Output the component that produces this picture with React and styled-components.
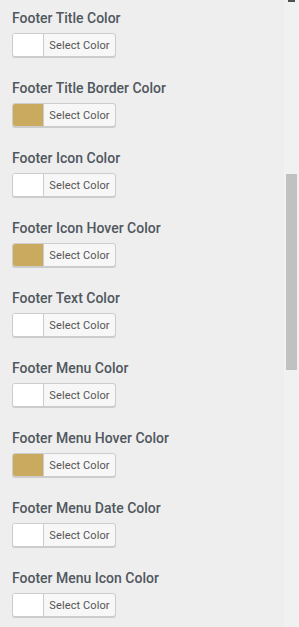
import React from "react";
import styled, { createGlobalStyle } from "styled-components";

const Global = createGlobalStyle`
  html, body { margin: 0; padding: 0; background: #eeeeee; }
  body { font-family: Roboto, "Noto Sans", "Liberation Sans", sans-serif; }
`;

const Page = styled.div`
  display: flex;
  width: 299px;
  height: 627px;
  overflow: hidden;
  background: #eeeeee;
`;

const Content = styled.div`
  flex: 1;
  display: flex;
  flex-direction: column;
  padding: 8px 0 0 12px;
`;

const Section = styled.div`
  display: flex;
  flex-direction: column;
  align-items: flex-start;
  gap: 5px;
  margin-bottom: 21px;
`;

const Title = styled.div`
  font-size: 14px;
  line-height: 20px;
  font-weight: 500;
  color: #50575e;
  white-space: nowrap;
`;

const ColorButton = styled.button`
  display: flex;
  align-items: stretch;
  height: 24px;
  width: 104px;
  padding: 0;
  border: 1px solid #cccccc;
  border-radius: 3px;
  background: #f7f7f7;
  box-shadow: 0 1px 0 #cccccc;
  overflow: hidden;
  cursor: pointer;
  font-family: inherit;
`;

const Swatch = styled.span`
  width: 30px;
  background: ${(p) => p.$color};
  border-right: 1px solid #cccccc;
`;

const Label = styled.span`
  flex: 1;
  display: flex;
  align-items: center;
  justify-content: center;
  font-size: 11px;
  color: #555555;
  letter-spacing: 0.1px;
`;

const Track = styled.div`
  width: 15px;
  flex: none;
  background: #f1f1f1;
  display: flex;
  flex-direction: column;
  align-items: flex-start;
`;

const Arrow = styled.div`
  width: 7px;
  height: 2px;
  margin-left: 4px;
  background: #505050;
`;

const Thumb = styled.div`
  width: 11px;
  height: 196px;
  margin: 172px 0 0 2px;
  background: #c1c1c1;
`;

const GOLD = "#c9aa5f";
const items = [
  ["Footer Title Color", "#ffffff"],
  ["Footer Title Border Color", GOLD],
  ["Footer Icon Color", "#ffffff"],
  ["Footer Icon Hover Color", GOLD],
  ["Footer Text Color", "#ffffff"],
  ["Footer Menu Color", "#ffffff"],
  ["Footer Menu Hover Color", GOLD],
  ["Footer Menu Date Color", "#ffffff"],
  ["Footer Menu Icon Color", "#ffffff"],
];

export default function App() {
  return (
    <>
      <Global />
      <Page>
        <Content>
          {items.map(([t, c]) => (
            <Section key={t}>
              <Title>{t}</Title>
              <ColorButton type="button">
                <Swatch $color={c} />
                <Label>Select Color</Label>
              </ColorButton>
            </Section>
          ))}
        </Content>
        <Track>
          <Arrow />
          <Thumb />
        </Track>
      </Page>
    </>
  );
}
